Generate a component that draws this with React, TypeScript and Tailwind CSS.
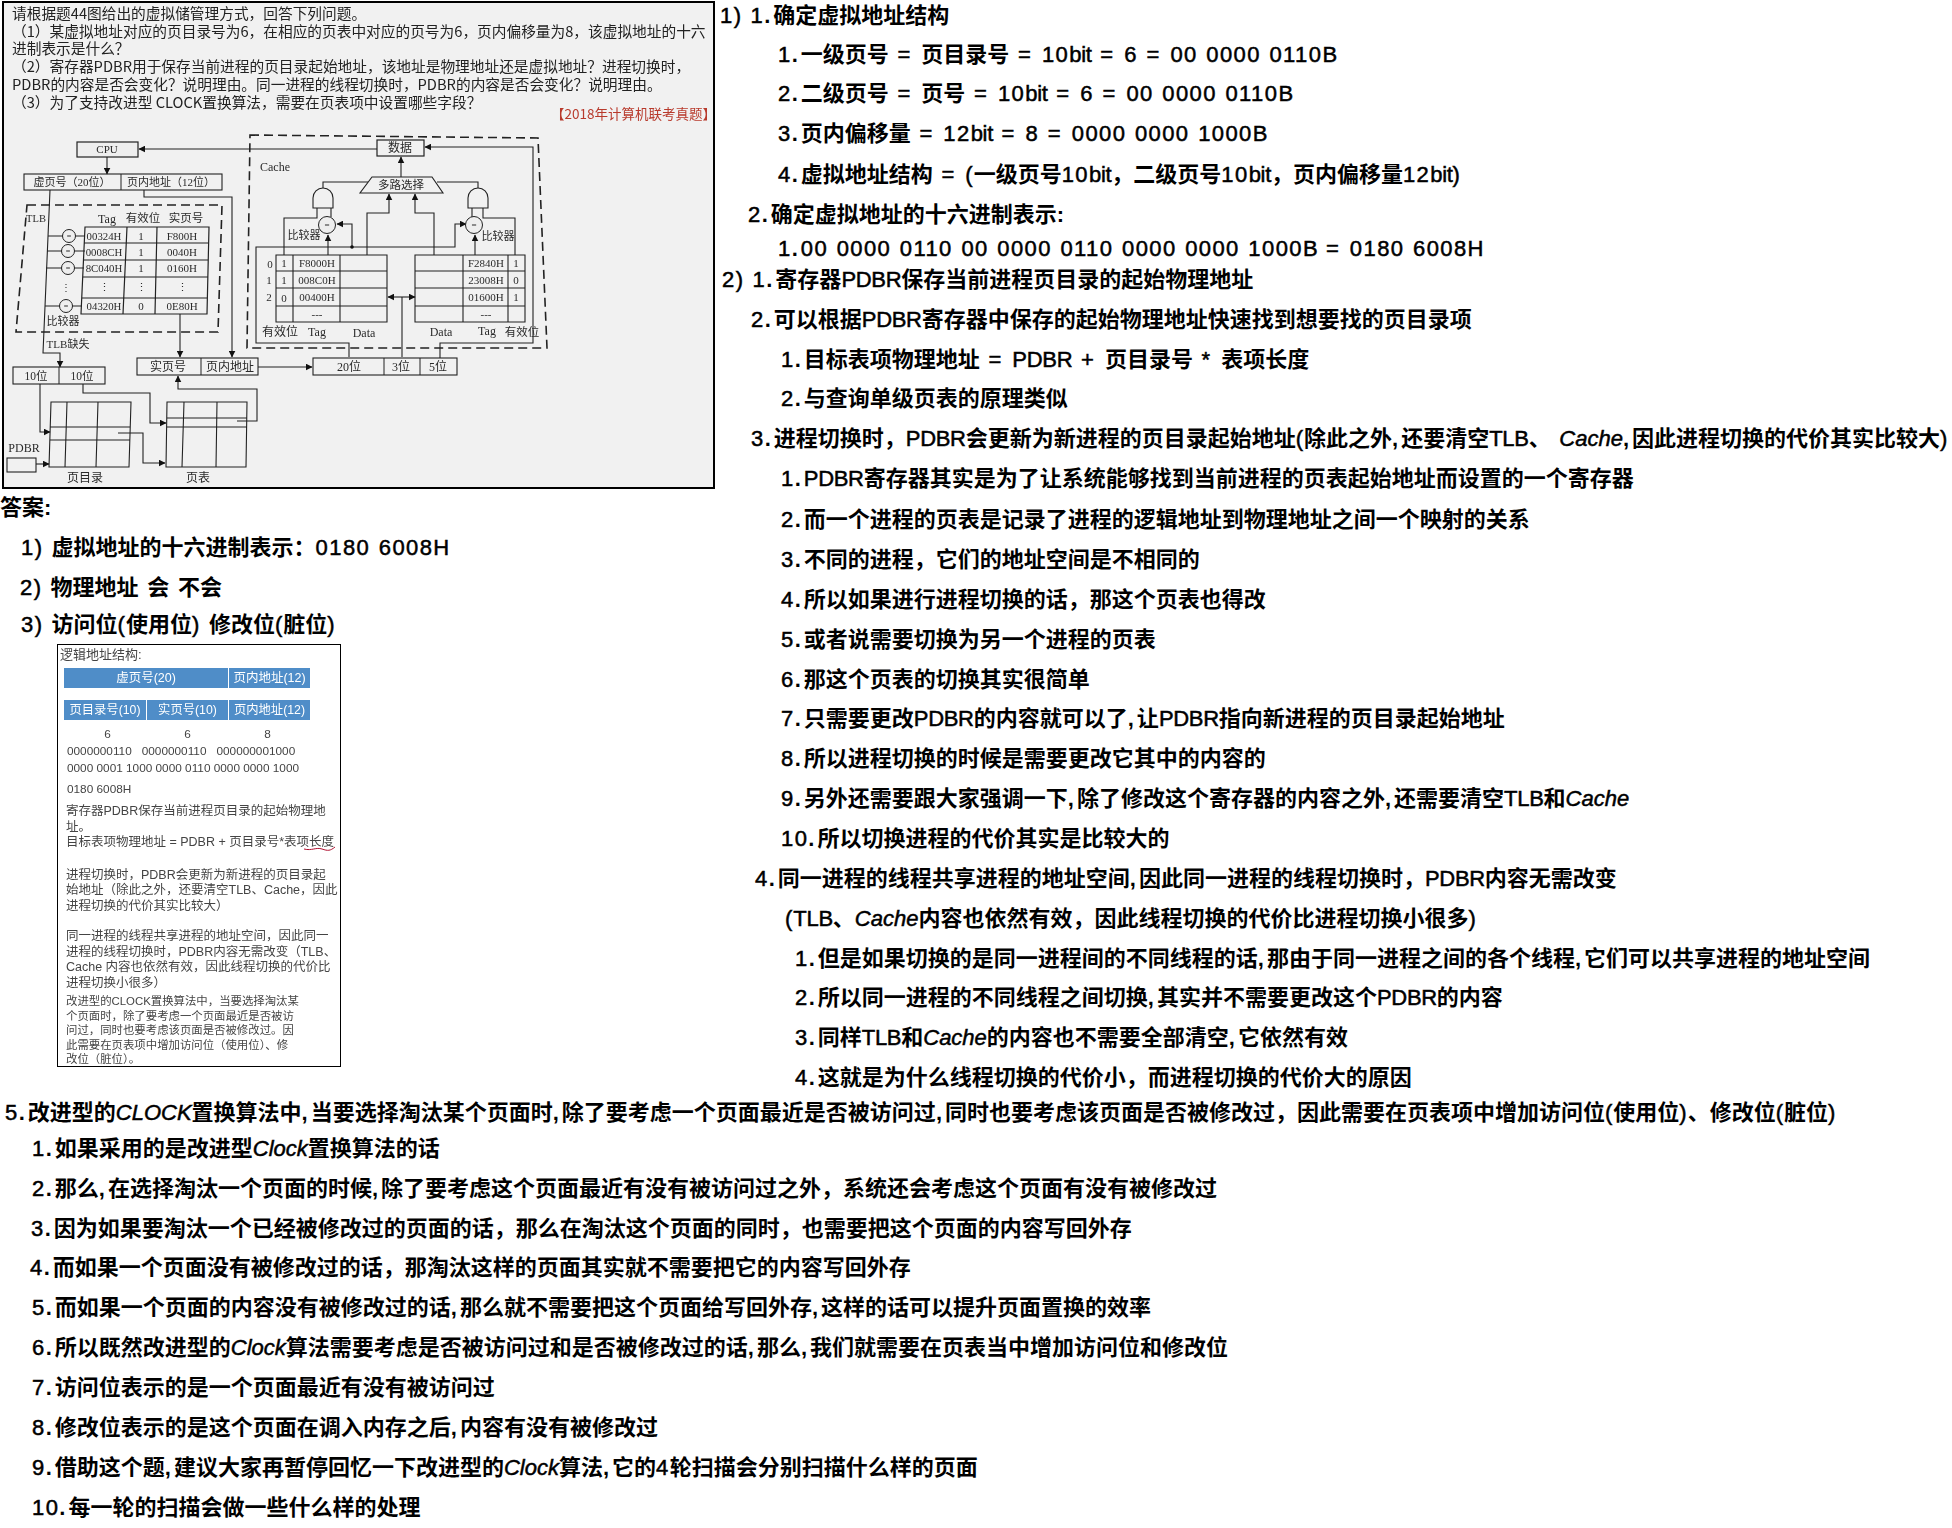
const rightRows = [
  { c: "h-[39px] pl-[2px]", t: "1) 1.确定虚拟地址结构" },
  { c: "h-[39px] pl-[60px]", t: "1.一级页号 = 页目录号 = 10bit = 6 = 00 0000 0110B" },
  { c: "h-10 pl-[60px]", t: "2.二级页号 = 页号 = 10bit = 6 = 00 0000 0110B" },
  { c: "h-[41px] pl-[60px]", t: "3.页内偏移量 = 12bit = 8 = 0000 0000 1000B" },
  { c: "h-10 pl-[60px]", t: "4.虚拟地址结构 = (一级页号10bit，二级页号10bit，页内偏移量12bit)" },
  { c: "h-[34px] pl-[30px]", t: "2.确定虚拟地址的十六进制表示:" },
  { c: "h-[31px] pl-[60px]", t: "1.00 0000 0110 00 0000 0110 0000 0000 1000B = 0180 6008H" },
  { c: "h-10 pl-[4px]", t: "2) 1.寄存器PDBR保存当前进程页目录的起始物理地址" },
  { c: "h-10 pl-[33px]", t: "2.可以根据PDBR寄存器中保存的起始物理地址快速找到想要找的页目录项" },
  { c: "h-[39px] pl-[63px]", t: "1.目标表项物理地址 = PDBR + 页目录号 * 表项长度" },
  { c: "h-10 pl-[63px]", t: "2.与查询单级页表的原理类似" },
  { c: "h-10 pl-[33px]", t: "3.进程切换时，PDBR会更新为新进程的页目录起始地址(除此之外,还要清空TLB、 Cache,因此进程切换的代价其实比较大)" },
  { c: "h-[41px] pl-[63px]", t: "1.PDBR寄存器其实是为了让系统能够找到当前进程的页表起始地址而设置的一个寄存器" },
  { c: "h-10 pl-[63px]", t: "2.而一个进程的页表是记录了进程的逻辑地址到物理地址之间一个映射的关系" },
  { c: "h-10 pl-[63px]", t: "3.不同的进程，它们的地址空间是不相同的" },
  { c: "h-10 pl-[63px]", t: "4.所以如果进行进程切换的话，那这个页表也得改" },
  { c: "h-10 pl-[63px]", t: "5.或者说需要切换为另一个进程的页表" },
  { c: "h-[39px] pl-[63px]", t: "6.那这个页表的切换其实很简单" },
  { c: "h-10 pl-[63px]", t: "7.只需要更改PDBR的内容就可以了,让PDBR指向新进程的页目录起始地址" },
  { c: "h-10 pl-[63px]", t: "8.所以进程切换的时候是需要更改它其中的内容的" },
  { c: "h-10 pl-[63px]", t: "9.另外还需要跟大家强调一下,除了修改这个寄存器的内容之外,还需要清空TLB和Cache" },
  { c: "h-10 pl-[63px]", t: "10.所以切换进程的代价其实是比较大的" },
  { c: "h-10 pl-[37px]", t: "4.同一进程的线程共享进程的地址空间,因此同一进程的线程切换时，PDBR内容无需改变" },
  { c: "h-10 pl-[67px]", t: "(TLB、Cache内容也依然有效，因此线程切换的代价比进程切换小很多)" },
  { c: "h-[39px] pl-[77px]", t: "1.但是如果切换的是同一进程间的不同线程的话,那由于同一进程之间的各个线程,它们可以共享进程的地址空间" },
  { c: "h-10 pl-[77px]", t: "2.所以同一进程的不同线程之间切换,其实并不需要更改这个PDBR的内容" },
  { c: "h-10 pl-[77px]", t: "3.同样TLB和Cache的内容也不需要全部清空,它依然有效" },
  { c: "h-[35px] pl-[77px]", t: "4.这就是为什么线程切换的代价小，而进程切换的代价大的原因" },
];

const bottomRows = [
  { c: "h-9 pl-[5px]", t: "5.改进型的CLOCK置换算法中,当要选择淘汰某个页面时,除了要考虑一个页面最近是否被访问过,同时也要考虑该页面是否被修改过，因此需要在页表项中增加访问位(使用位)、修改位(脏位)" },
  { c: "h-10 pl-[32px]", t: "1.如果采用的是改进型Clock置换算法的话" },
  { c: "h-10 pl-[32px]", t: "2.那么,在选择淘汰一个页面的时候,除了要考虑这个页面最近有没有被访问过之外，系统还会考虑这个页面有没有被修改过" },
  { c: "h-[39px] pl-[31px]", t: "3.因为如果要淘汰一个已经被修改过的页面的话，那么在淘汰这个页面的同时，也需要把这个页面的内容写回外存" },
  { c: "h-10 pl-[30px]", t: "4.而如果一个页面没有被修改过的话，那淘汰这样的页面其实就不需要把它的内容写回外存" },
  { c: "h-10 pl-[32px]", t: "5.而如果一个页面的内容没有被修改过的话,那么就不需要把这个页面给写回外存,这样的话可以提升页面置换的效率" },
  { c: "h-10 pl-[32px]", t: "6.所以既然改进型的Clock算法需要考虑是否被访问过和是否被修改过的话,那么,我们就需要在页表当中增加访问位和修改位" },
  { c: "h-10 pl-[32px]", t: "7.访问位表示的是一个页面最近有没有被访问过" },
  { c: "h-10 pl-[32px]", t: "8.修改位表示的是这个页面在调入内存之后,内容有没有被修改过" },
  { c: "h-10 pl-[32px]", t: "9.借助这个题,建议大家再暂停回忆一下改进型的Clock算法,它的4轮扫描会分别扫描什么样的页面" },
  { c: "h-[36px] pl-[32px]", t: "10.每一轮的扫描会做一些什么样的处理" },
];

const questionLines = [
  "请根据题44图给出的虚拟储管理方式，回答下列问题。",
  "（1）某虚拟地址对应的页目录号为6，在相应的页表中对应的页号为6，页内偏移量为8，该虚拟地址的十六",
  "进制表示是什么？",
  "（2）寄存器PDBR用于保存当前进程的页目录起始地址，该地址是物理地址还是虚拟地址？进程切换时，",
  "PDBR的内容是否会变化？说明理由。同一进程的线程切换时，PDBR的内容是否会变化？说明理由。",
  "（3）为了支持改进型 CLOCK置换算法，需要在页表项中设置哪些字段？",
];

// the notes use a handwriting latin face: wide digits and dots, narrow capitals
const latinClass = (run: string) => {
  if (/^[0-9]+$/.test(run)) return "font-normal tracking-[1.4px] [-webkit-text-stroke:0.5px_#000]";
  if (/^[.,:]$/.test(run)) return "tracking-[3px]";
  if (/^[ =*+]+$/.test(run)) return "font-normal tracking-[2.5px] [-webkit-text-stroke:0.5px_#000]";
  if (/^(CLOCK|Clock|Cache)$/.test(run)) return "font-normal italic [-webkit-text-stroke:0.5px_#000]";
  if (/^[A-Za-z]+$/.test(run)) return "font-normal tracking-[-0.3px] [-webkit-text-stroke:0.5px_#000]";
  if (/^[()]$/.test(run)) return "font-normal tracking-[1px] [-webkit-text-stroke:0.5px_#000]";
  return "";
};

const Note = ({ c, t }: { c: string; t: string }) => (
  <div className={`${c} whitespace-pre text-[22px] leading-[32px] font-bold text-black`}>
    {t.split(/([0-9]+|[.,:]|[ =*+]+|[A-Za-z]+|[()])/).map((run, i) => (
      <span key={i} className={latinClass(run)}>{run}</span>
    ))}
  </div>
);

const serif = "font-['Liberation_Serif','Noto_Sans_CJK_SC',serif]";

// one label in the scanned diagram
const L = ({ x, y, s = 11.5, children }: { x: number; y: number; s?: number; children: string }) => (
  <text x={x} y={y} textAnchor="middle" dominantBaseline="central" fontSize={s} fill="#2a2a2a">
    {children}
  </text>
);

const Wire = ({ d, arrow }: { d: string; arrow?: boolean }) => (
  <path d={d} fill="none" stroke="#222" strokeWidth="1.1" markerEnd={arrow ? "url(#tip)" : undefined} />
);

const tlbRows = [
  ["00324H", "1", "F800H", 236],
  ["0008CH", "1", "0040H", 252],
  ["8C040H", "1", "0160H", 268],
  ["⋮", "⋮", "⋮", 287],
  ["04320H", "0", "0E80H", 306],
] as const;

const Diagram = () => (
  <svg viewBox="4 125 709 362" width="709" height="362" className={`block ${serif}`}>
    <defs>
      <marker id="tip" viewBox="0 0 6 6" refX="5.5" refY="3" markerWidth="7" markerHeight="7" markerUnits="userSpaceOnUse" orient="auto-start-reverse">
        <path d="M0 0L6 3L0 6Z" fill="#111" />
      </marker>
    </defs>

    {/* CPU and address */}
    <rect x="77" y="142" width="61" height="15" fill="#eee" stroke="#222" strokeWidth="1.2" />
    <L x={107} y={149} s={11}>CPU</L>
    <Wire d="M107 157V174" arrow />
    <Wire d="M377 149H139" arrow />
    <rect x="24" y="174" width="198" height="16" fill="none" stroke="#222" strokeWidth="1.1" />
    <path d="M121 174V190" stroke="#222" />
    <L x={72} y={182} s={11}>虚页号（20位）</L>
    <L x={171} y={182} s={11}>页内地址（12位）</L>

    {/* TLB */}
    <path d="M27 205H222L218 332H16Z" fill="none" stroke="#222" strokeWidth="1.6" strokeDasharray="9 5" />
    <L x={36} y={218} s={10.5}>TLB</L>
    <L x={107} y={219} s={12}>Tag</L>
    <L x={143} y={218} s={11.5}>有效位</L>
    <L x={186} y={218} s={11.5}>实页号</L>
    <path d="M85 227H209L207 314H81Z" fill="none" stroke="#222" strokeWidth="1.2" />
    <path d="M84 243H208M84 260H208M83 277H208M82 298H207M127 227L123 314M157 227L155 314" stroke="#222" strokeWidth="1.2" />
    {tlbRows.map((r) => (
      <g key={r[3]}>
        <L x={104} y={r[3]} s={10.8}>{r[0]}</L>
        <L x={141} y={r[3]} s={11}>{r[1]}</L>
        <L x={182} y={r[3]} s={11}>{r[2]}</L>
      </g>
    ))}
    <Wire d="M50 190L43 353H60V367" arrow />
    <Wire d="M48 236H85M47 251H85M46 268H84M45 306H82" />
    {[[69, 236], [68, 251], [68, 268], [66, 306]].map(([x, y]) => (
      <g key={y}>
        <circle cx={x} cy={y} r="6.5" fill="#eee" stroke="#222" />
        <L x={x} y={y} s={8}>=</L>
      </g>
    ))}
    <L x={66} y={287} s={10}>⋮</L>
    <L x={63} y={321} s={11}>比较器</L>
    <L x={68} y={344} s={11}>TLB缺失</L>
    <Wire d="M144 190V197H232V357" arrow />
    <Wire d="M180 314V357" arrow />

    {/* real address */}
    <rect x="137" y="358" width="121" height="17" fill="none" stroke="#222" strokeWidth="1.1" />
    <path d="M201 358V375" stroke="#222" />
    <L x={168} y={367} s={12}>实页号</L>
    <L x={230} y={367} s={12}>页内地址</L>
    <Wire d="M258 367H312" arrow />
    <rect x="313" y="358" width="144" height="17" fill="none" stroke="#222" strokeWidth="1.1" />
    <path d="M384 358V375M420 358V375" stroke="#222" />
    <L x={349} y={367} s={12}>20位</L>
    <L x={401} y={367} s={12}>3位</L>
    <L x={438} y={367} s={12}>5位</L>

    {/* page tables */}
    <rect x="13" y="367" width="92" height="17" fill="none" stroke="#222" strokeWidth="1.1" />
    <path d="M59 367V384" stroke="#222" />
    <L x={36} y={376} s={11.5}>10位</L>
    <L x={82} y={376} s={11.5}>10位</L>
    <Wire d="M40 384V432H50" arrow />
    <Wire d="M83 384V393H150V423H166" arrow />
    <path d="M51 402H131L129 467H49ZM50 427H130M50 440H130M67 402L65 467M98 402L96 467" fill="none" stroke="#222" strokeWidth="1.1" />
    <path d="M167 402H247L246 467H166ZM167 418H247M167 427H247M184 402L182 467M217 402L216 467" fill="none" stroke="#222" strokeWidth="1.1" />
    <Wire d="M118 433H143V463H165" arrow />
    <Wire d="M237 421H257V389H178V376" arrow />
    <L x={24} y={448} s={12}>PDBR</L>
    <rect x="7" y="458" width="29" height="14" fill="none" stroke="#222" strokeWidth="1.1" />
    <Wire d="M36 464H49" arrow />
    <L x={85} y={478} s={12}>页目录</L>
    <L x={198} y={478} s={12}>页表</L>

    {/* Cache */}
    <path d="M250 135L538 138L547 348H247Z" fill="none" stroke="#222" strokeWidth="1.6" strokeDasharray="9 5" />
    <L x={275} y={167} s={12}>Cache</L>
    <rect x="377" y="140" width="47" height="16" fill="none" stroke="#222" strokeWidth="1.2" />
    <L x={400} y={148} s={12}>数据</L>
    <Wire d="M440 358V343H533V147H425" arrow />
    <Wire d="M401 177V157" arrow />
    <path d="M372 177H432L443 193H360Z" fill="none" stroke="#222" strokeWidth="1.1" />
    <L x={401} y={185} s={11.5}>多路选择</L>
    <Wire d="M323 188V182H368" />
    <Wire d="M478 188V182H437" />
    <path d="M313 208V198A10 10 0 0 1 333 198V208ZM468 208V198A10 10 0 0 1 488 198V208Z" fill="none" stroke="#222" strokeWidth="1.1" />
    <Wire d="M284 255V218H317V208M331 208V217M515 255V218H483V208M472 208V217" />
    <Wire d="M349 357V343H256V247H455V224H466" arrow />
    <Wire d="M352 247V224H337" arrow />
    <circle cx="352" cy="247" r="1.8" fill="#111" />
    <circle cx="327" cy="225" r="8.5" fill="#eee" stroke="#222" />
    <L x={327} y={225} s={9}>=</L>
    <circle cx="474" cy="225" r="8.5" fill="#eee" stroke="#222" />
    <L x={474} y={225} s={9}>=</L>
    <L x={304} y={235} s={11}>比较器</L>
    <L x={498} y={236} s={11}>比较器</L>
    <Wire d="M328 255V235" arrow />
    <Wire d="M475 255V235" arrow />
    <Wire d="M367 255V213H389V194" arrow />
    <Wire d="M434 255V213H415V194" arrow />

    <path d="M276 255H387V322H276ZM276 271H387M276 288H387M276 306H387M293 255V322M340 255V322" fill="none" stroke="#222" strokeWidth="1.1" />
    <path d="M415 255H525V322H415ZM415 271H525M415 288H525M415 306H525M463 255V322M508 255V322" fill="none" stroke="#222" strokeWidth="1.1" />
    <L x={270} y={264} s={11}>0</L>
    <L x={269} y={280} s={11}>1</L>
    <L x={269} y={297} s={11}>2</L>
    <L x={284} y={263} s={11}>1</L>
    <L x={284} y={280} s={11}>1</L>
    <L x={284} y={298} s={11}>0</L>
    <L x={317} y={263} s={11}>F8000H</L>
    <L x={317} y={280} s={11}>008C0H</L>
    <L x={317} y={297} s={11}>00400H</L>
    <L x={317} y={314} s={11}>---</L>
    <L x={486} y={263} s={11}>F2840H</L>
    <L x={486} y={280} s={11}>23008H</L>
    <L x={486} y={297} s={11}>01600H</L>
    <L x={486} y={314} s={11}>---</L>
    <L x={516} y={263} s={11}>1</L>
    <L x={516} y={280} s={11}>0</L>
    <L x={516} y={297} s={11}>1</L>
    <L x={280} y={332} s={12}>有效位</L>
    <L x={317} y={332} s={12}>Tag</L>
    <L x={364} y={333} s={12}>Data</L>
    <L x={441} y={332} s={12}>Data</L>
    <L x={487} y={331} s={12}>Tag</L>
    <L x={522} y={332} s={11.5}>有效位</L>
    <Wire d="M402 357V297" />
    <path d="M388 297H415" stroke="#222" strokeWidth="1.1" markerStart="url(#tip)" markerEnd="url(#tip)" fill="none" />
  </svg>
);

const ScannedQuestion = () => (
  <div className="ml-[2px] mt-[1px] flex h-[488px] w-[713px] flex-col border-2 border-black bg-[#f1f1f1] blur-[0.4px]">
    <div className="h-[122px] pt-[1px] pl-[8px] font-['Noto_Sans_CJK_SC',sans-serif] text-[14.7px] leading-[17.7px] text-[#222]">
      {questionLines.map((l) => (
        <div key={l} className="whitespace-pre">{l}</div>
      ))}
      <div className="-mr-[3px] -mt-[5px] whitespace-pre text-right text-[13.5px] text-[#b83a2c]">【2018年计算机联考真题】</div>
    </div>
    <Diagram />
  </div>
);

const AnswerCard = () => (
  <div className="ml-[57px] h-[423px] w-[284px] border border-black bg-white font-['Liberation_Sans','Noto_Sans_CJK_SC',sans-serif] text-[#444] blur-[0.4px]">
    <div className="h-[23px] pl-[2px] text-[13px] leading-[19px]">逻辑地址结构:</div>
    <div className="ml-[6px] flex h-5 gap-px text-[12.5px] leading-5 text-white">
      <div className="w-[164px] bg-[#4f8dc8] text-center">虚页号(20)</div>
      <div className="w-[81px] bg-[#4f8dc8] text-center">页内地址(12)</div>
    </div>
    <div className="ml-[6px] mt-3 flex h-5 gap-px text-[12.3px] leading-5 text-white">
      <div className="w-[82px] bg-[#4f8dc8] text-center">页目录号(10)</div>
      <div className="w-[81px] bg-[#4f8dc8] text-center">实页号(10)</div>
      <div className="w-[81px] bg-[#4f8dc8] text-center">页内地址(12)</div>
    </div>
    <div className="mt-[6px] flex h-4 pl-[9px] text-[11.8px] leading-4">
      <div className="w-[81px] text-center">6</div>
      <div className="w-[79px] text-center">6</div>
      <div className="w-[81px] text-center">8</div>
    </div>
    <div className="mt-px flex h-[17px] gap-[10px] pl-[9px] text-[11.8px] leading-[17px]">
      <span>0000000110</span>
      <span>0000000110</span>
      <span>000000001000</span>
    </div>
    <div className="h-[17px] pl-[9px] text-[11.8px] leading-[17px]">0000 0001 1000 0000 0110 0000 0000 1000</div>
    <div className="mt-1 h-[17px] pl-[9px] text-[11.8px] leading-[17px]">0180 6008H</div>
    <div className="mt-[6px] whitespace-nowrap pl-[8px] text-[12.5px] leading-[15.5px]">
      <p>寄存器PDBR保存当前进程页目录的起始物理地</p>
      <p>址。</p>
      <p className="relative">
        目标表项物理地址 = PDBR + 页目录号*表项长度
        <svg className="absolute left-[238px] top-[9px]" width="32" height="8" viewBox="0 0 32 8">
          <path d="M0 5C8 7 12 3 18 5S26 7 31 3" fill="none" stroke="#b01030" strokeWidth="1" />
        </svg>
      </p>
      <p className="mt-[17px]">进程切换时，PDBR会更新为新进程的页目录起</p>
      <p>始地址（除此之外，还要清空TLB、Cache，因此</p>
      <p>进程切换的代价其实比较大）</p>
      <p className="mt-[15px]">同一进程的线程共享进程的地址空间，因此同一</p>
      <p>进程的线程切换时，PDBR内容无需改变（TLB、</p>
      <p>Cache 内容也依然有效，因此线程切换的代价比</p>
      <p>进程切换小很多）</p>
      <div className="mt-[3px] text-[11.4px] leading-[14.5px]">
        <p>改进型的CLOCK置换算法中，当要选择淘汰某</p>
        <p>个页面时，除了要考虑一个页面最近是否被访</p>
        <p>问过，同时也要考虑该页面是否被修改过。因</p>
        <p>此需要在页表项中增加访问位（使用位）、修</p>
        <p>改位（脏位）。</p>
      </div>
    </div>
  </div>
);

export default function App() {
  return (
    <div className="h-[1528px] w-[1952px] overflow-hidden bg-white font-['Liberation_Sans','Noto_Sans_CJK_SC',sans-serif]">
      <div className="flex h-[1097px]">
        <div className="w-[718px] shrink-0">
          <ScannedQuestion />
          <div className="mt-[3px]">
            <Note c="h-10" t="答案:" />
            <Note c="h-10 pl-[21px]" t="1) 虚拟地址的十六进制表示：0180 6008H" />
            <Note c="h-[37px] pl-[20px]" t="2) 物理地址 会 不会" />
            <Note c="h-[35px] pl-[21px]" t="3) 访问位(使用位) 修改位(脏位)" />
            <AnswerCard />
          </div>
        </div>
        <div className="min-w-0 flex-1">
          {rightRows.map((r) => (
            <Note key={r.t} c={r.c} t={r.t} />
          ))}
        </div>
      </div>
      {bottomRows.map((r) => (
        <Note key={r.t} c={r.c} t={r.t} />
      ))}
    </div>
  );
}
